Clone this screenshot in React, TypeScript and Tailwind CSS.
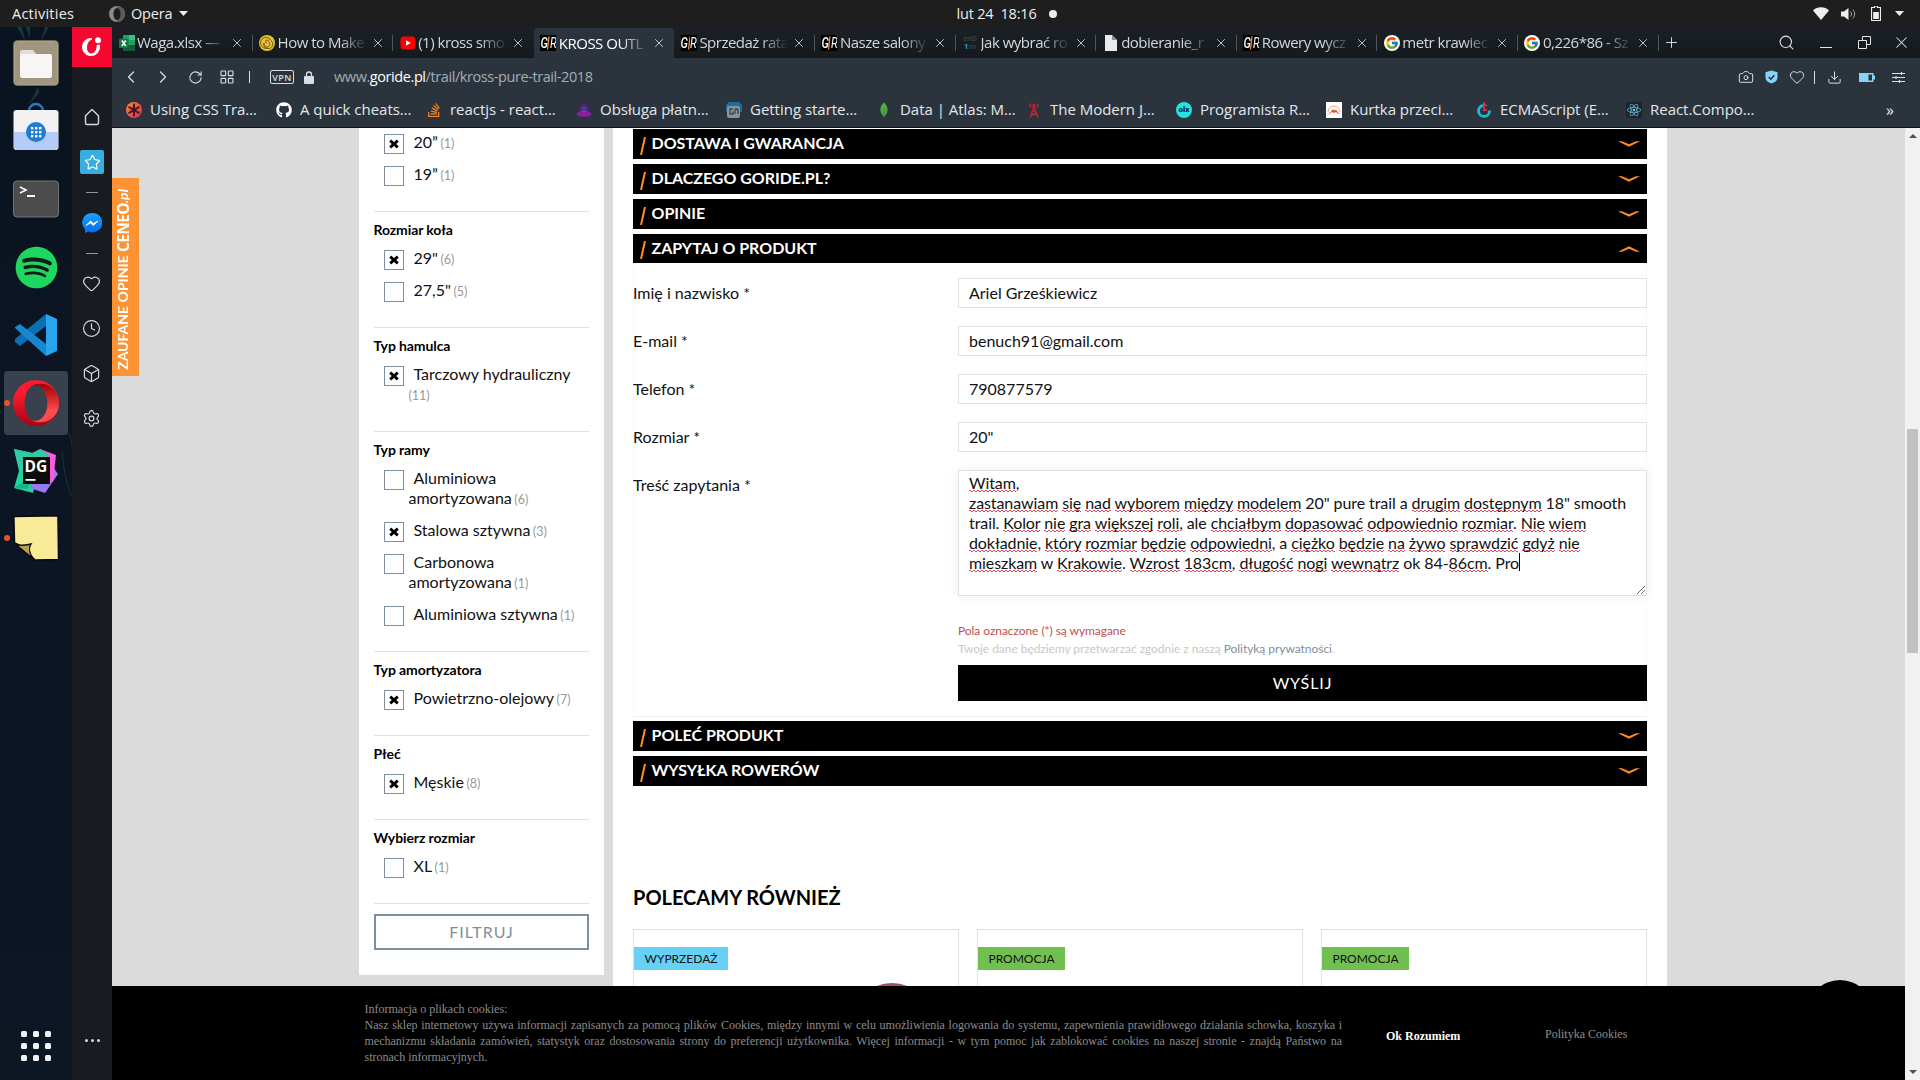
import React from "react";
import {
  Home,
  Star,
  Heart,
  Clock,
  Box,
  Settings,
  Search,
  X,
  Plus,
  ChevronLeft,
  ChevronRight,
  RotateCw,
  LayoutGrid,
  Camera,
  Download,
} from "lucide-react";
import { FaGithub, FaStackOverflow, FaSpotify, FaReact } from "react-icons/fa";
import { SiMongodb } from "react-icons/si";
import { FcGoogle } from "react-icons/fc";

/* ---------- small icons ---------- */

const Excel = () => (
  <svg viewBox="0 0 16 16" className="size-4">
    <rect x="4" y="0" width="12" height="16" rx="1" fill="#21a366" />
    <rect x="10" y="0" width="6" height="5" fill="#33c481" />
    <rect x="4" y="10" width="12" height="6" fill="#185c37" />
    <rect x="0" y="3.500" width="9.500" height="9.500" rx="1" fill="#107c41" />
    <path d="M2.800 5.500l4 5.500M6.800 5.500l-4 5.500" stroke="#fff" strokeWidth="1.500" />
  </svg>
);
const Spiral = () => (
  <svg viewBox="0 0 16 16" className="size-4">
    <circle cx="8" cy="8" r="8" fill="#e8c33a" />
    <path d="M8 8a1.500 1.500 0 1 1 1.500-1.500A3 3 0 1 1 5 8a4.500 4.500 0 1 0 7-2.500A5.500 5.500 0 1 0 9 13" fill="none" stroke="#7a5a10" strokeWidth="1" />
  </svg>
);
const YouTube = () => (
  <svg viewBox="0 0 16 16" className="size-4">
    <rect x="0.500" y="1.500" width="15" height="13" rx="3.500" fill="#f00" />
    <path d="M6 5.300v5.400L10.800 8z" fill="#fff" />
  </svg>
);
const GoRide = () => (
  <span className="flex size-4 items-center justify-center overflow-hidden bg-black font-['Roboto'] text-[14px] leading-4 text-white italic">
    <span className="flex w-[6.500px] scale-x-[0.800] justify-center font-medium">G</span>
    <svg viewBox="0 0 3 16" className="h-4 w-[2.500px] shrink-0">
      <path d="M2.400 0L.6 16" stroke="#ff8c26" strokeWidth="1.500" />
    </svg>
    <span className="flex w-[6.500px] scale-x-[0.800] justify-center">R</span>
  </span>
);
const EndPro = () => (
  <span className="flex size-4 flex-col items-center justify-center font-['Roboto'] text-[8px] leading-[8px] font-bold text-[#3a3d40]">
    <span>enD</span>
    <span>
      <span className="text-[#1da1e0]">1</span>ro
    </span>
  </span>
);
const Doc = () => (
  <svg viewBox="0 0 16 16" className="size-4">
    <path d="M2 0h7l5 5v11H2z" fill="#e8eaed" />
    <path d="M9 0v5h5" fill="#8a9096" />
  </svg>
);
const GoogleTab = () => (
  <span className="flex size-4 items-center justify-center rounded-full bg-white">
    <FcGoogle className="size-[14px]" />
  </span>
);

const tabs: { title: string; icon: React.ReactNode; active?: boolean }[] = [
  { title: "Waga.xlsx —", icon: <Excel /> },
  { title: "How to Make", icon: <Spiral /> },
  { title: "(1) kross smo", icon: <YouTube /> },
  { title: "KROSS OUTL", icon: <GoRide />, active: true },
  { title: "Sprzedaż rata", icon: <GoRide /> },
  { title: "Nasze salony", icon: <GoRide /> },
  { title: "Jak wybrać ro", icon: <EndPro /> },
  { title: "dobieranie_r", icon: <Doc /> },
  { title: "Rowery wycz", icon: <GoRide /> },
  { title: "metr krawiec", icon: <GoogleTab /> },
  { title: "0,226*86 - Sz", icon: <GoogleTab /> },
];

const bookmarks: { title: string; icon: React.ReactNode }[] = [
  {
    title: "Using CSS Tra…",
    icon: (
      <svg viewBox="0 0 16 16" className="size-4">
        <defs>
          <linearGradient id="bm" x1="0" y1="0" x2="1" y2="1">
            <stop offset="0" stopColor="#ff8a2a" />
            <stop offset="1" stopColor="#e2255b" />
          </linearGradient>
        </defs>
        <circle cx="8" cy="8" r="8" fill="url(#bm)" />
        <path d="M8 2.500v11M3.200 5.200l9.600 5.600M12.800 5.200l-9.600 5.600" stroke="#3a1d26" strokeWidth="2" strokeLinecap="round" />
      </svg>
    ),
  },
  { title: "A quick cheats…", icon: <FaGithub className="size-4 text-white" /> },
  { title: "reactjs - react…", icon: <FaStackOverflow className="size-4 text-[#f48024]" /> },
  {
    title: "Obsługa płatn…",
    icon: (
      <svg viewBox="0 0 16 16" className="size-4">
        <ellipse cx="8" cy="12" rx="7.500" ry="3" fill="#8a1fa0" />
        <path d="M2.500 10C2.500 5 5 2 8 2s5.500 3 5.500 8z" fill="#5b1f78" />
        <path d="M5 9h6M6 6h4" stroke="#2b7fd8" strokeWidth="1" />
      </svg>
    ),
  },
  {
    title: "Getting starte…",
    icon: (
      <svg viewBox="0 0 16 16" className="size-4">
        <path d="M0 3l3-3h10l3 3v7H0z" fill="#1a6f9c" />
        <rect x="1" y="4" width="13" height="12" rx="2" fill="#8a9299" />
        <path d="M7 7H4v5h3V9.500M9 7v5M12 7v5M9 7h3" stroke="#3a444c" strokeWidth="1.300" fill="none" />
      </svg>
    ),
  },
  { title: "Data | Atlas: M…", icon: <SiMongodb className="size-4 text-[#4faa41]" /> },
  {
    title: "The Modern J…",
    icon: (
      <svg viewBox="0 0 16 16" className="size-4" fill="none" stroke="#d11f2d" strokeWidth="1.200">
        <path d="M8 4L4 16M8 4l4 12M5.500 11l5 2M6.500 8l4 3M10.500 11l-6 3" />
        <path d="M5 1.500a3 3 0 0 0 0 4M11 1.500a3 3 0 0 1 0 4" />
        <circle cx="8" cy="3.500" r="1" fill="#d11f2d" />
      </svg>
    ),
  },
  {
    title: "Programista R…",
    icon: (
      <span className="flex size-4 items-center justify-center rounded-full bg-[#23e5db] font-['Roboto'] text-[8px] font-black tracking-normal text-[#002f34]">
        olx
      </span>
    ),
  },
  {
    title: "Kurtka przeci…",
    icon: (
      <svg viewBox="0 0 16 16" className="size-4">
        <rect width="16" height="16" fill="#fff" />
        <path d="M2 10a6 6 0 0 1 12 0" fill="none" stroke="#f2a07c" strokeWidth="1" />
        <path d="M2 13l5-6 1.500 1.500L10 7.500 14 13l-4-3-2 1-2-1z" fill="#e9562a" />
      </svg>
    ),
  },
  {
    title: "ECMAScript (E…",
    icon: (
      <svg viewBox="0 0 16 16" className="size-4" fill="none">
        <path d="M7 3.500a5.500 5.500 0 1 0 6.500 5" stroke="#19bcd6" strokeWidth="2.800" />
        <path d="M8 0v9M8 8h3M8 2l3 2" stroke="#e8384f" strokeWidth="1.500" />
      </svg>
    ),
  },
  {
    title: "React.Compo…",
    icon: (
      <span className="flex size-4 items-center justify-center rounded-[2px] bg-[#20232a]">
        <FaReact className="size-[14px] text-[#5fc9e8]" />
      </span>
    ),
  },
];

/* ---------- desktop shell ---------- */

function TopBar() {
  return (
    <div className="grid h-[27px] shrink-0 grid-cols-3 items-center bg-[#1e1e1e] font-['Open_Sans','Noto_Sans',sans-serif] text-[14.500px] tracking-[-0.200px] text-[#eeeeee]">
      <div className="flex items-center pl-3">
        <span className="w-[97px] tracking-[0.250px]">Activities</span>
        <svg viewBox="0 0 16 16" className="size-4">
          <ellipse cx="8" cy="8" rx="8" ry="8" fill="#8a8a8a" />
          <path d="M8 0a8 8 0 0 1 0 16z" fill="#5c5c5c" />
          <ellipse cx="8" cy="8" rx="3.600" ry="6" fill="#1e1e1e" />
        </svg>
        <span className="ml-1.5 w-[48px]">Opera</span>
        <svg viewBox="0 0 9 5" className="h-[5px] w-[9px]">
          <path d="M0 0h9L4.500 5z" fill="#eee" />
        </svg>
      </div>
      <div className="flex items-center justify-center pl-[93px]">
        <span className="w-[92px] whitespace-pre">lut 24  18:16</span>
        <span className="size-2 rounded-full bg-[#eeeeee]" />
      </div>
      <div className="flex items-center justify-end pr-4">
        <svg viewBox="0 0 16 13" className="h-[13px] w-4">
          <path d="M0 3.500C4-.8 12-.8 16 3.500L8 13z" fill="#eee" />
        </svg>
        <svg viewBox="0 0 16 14" className="ml-3 h-[14px] w-4">
          <path d="M0 4.500h3L7.500 1v12L3 9.500H0z" fill="#eee" />
          <path d="M9.500 4.500c1.300 1.500 1.300 3.500 0 5M11.800 2.500c2.400 2.800 2.400 6.200 0 9" stroke="#aaa" fill="none" />
        </svg>
        <svg viewBox="0 0 10 15" className="ml-3.5 h-[15px] w-[10px]">
          <path d="M3.500 0h3v1.500H9.500v13H.5v-13h3z" fill="none" stroke="#eee" strokeWidth="1.200" />
          <rect x="2.200" y="6" width="5.600" height="7" fill="#eee" />
        </svg>
        <svg viewBox="0 0 9 5" className="ml-3.5 h-[5px] w-[9px]">
          <path d="M0 0h9L4.500 5z" fill="#eee" />
        </svg>
      </div>
    </div>
  );
}

function Launcher() {
  return (
    <div className="relative flex w-[72px] shrink-0 flex-col items-center bg-linear-to-b from-[#0a1420] via-[#0b1524] to-[#0d1623]">
      <svg viewBox="0 0 72 90" className="absolute top-0 left-0 h-[90px] w-[72px]" fill="#17494d" opacity="0.7">
        <path d="M17 0l8 14-3-14zM49 0l-8 14 4-14zM26 0l4 12V0zM38 60l-9 18 10-12zM34 52l6-3-4 9z" />
      </svg>
      <svg viewBox="0 0 72 90" className="absolute top-[390px] left-0 h-[90px] w-[72px]" stroke="#1d4a50" fill="none" opacity="0.6">
        <path d="M66 10c3 8 6 12 6 20M62 34c2 22 4 30 10 46" />
      </svg>

      {/* Files */}
      <svg viewBox="0 0 46 46" className="relative mt-[13px] size-[46px]">
        <rect x="0.500" y="0.500" width="45" height="45" rx="4" fill="#aaa08a" stroke="#6f6859" />
        <rect x="2" y="2" width="42" height="42" rx="3" fill="#a0967f" />
        <path d="M7 12a2 2 0 0 1 2-2h11l3 4h13v6H7z" fill="#e2ded5" />
        <rect x="7" y="14" width="32" height="24" rx="2" fill="#f7f6f4" />
      </svg>
      {/* Software */}
      <svg viewBox="0 0 46 50" className="relative mt-[15px] h-[50px] w-[46px]">
        <path d="M16 10a7 7 0 0 1 14 0" stroke="#1f7ad0" strokeWidth="2.400" fill="none" />
        <rect x="0.500" y="9" width="45" height="40" rx="3" fill="#f2f2f2" />
        <path d="M1 31h44v15a3 3 0 0 1-3 3H4a3 3 0 0 1-3-3z" fill="#b6ccf8" />
        <circle cx="23" cy="31" r="10" fill="#1f7ad0" />
        {[0, 1, 2].map((r) =>
          [0, 1, 2].map((c) => <rect key={`${r}${c}`} x={18 + c * 4} y={26 + r * 4} width="2.400" height="2.400" fill="#fff" />),
        )}
      </svg>
      {/* Terminal */}
      <svg viewBox="0 0 46 38" className="relative mt-[29px] h-[38px] w-[46px]">
        <rect x="0.500" y="1" width="45" height="36" rx="3.500" fill="#4c4c4c" stroke="#747474" />
        <path d="M7 7l6 3-6 3" stroke="#fff" strokeWidth="1.600" fill="none" />
        <path d="M14 16h8" stroke="#fff" strokeWidth="2" />
      </svg>
      {/* Spotify */}
      <span className="relative mt-[28px] flex size-[42px] items-center justify-center rounded-full bg-[#111b18]">
        <FaSpotify className="size-[43px] shrink-0 text-[#1ed760]" />
      </span>
      {/* Code */}
      <svg viewBox="0 0 42 42" className="relative mt-[26px] size-[42px]">
        <path d="M31 0v12L5 32l-5-4v-3z" fill="#0b6fb5" />
        <path d="M5 10L31 30v12L0 14v-1z" fill="#1787cf" />
        <path d="M31 0l11 5v32l-11 5z" fill="#27a5f0" />
      </svg>
      {/* Opera */}
      <div className="relative mt-[15px] flex h-16 w-16 items-center justify-center rounded-[4px] bg-[#3a414e]">
        <svg viewBox="0 0 46 46" className="size-[46px]">
          <defs>
            <linearGradient id="opA" x1="0" y1="0" x2="0" y2="1">
              <stop offset="0.300" stopColor="#ff1b2d" />
              <stop offset="1" stopColor="#a70014" />
            </linearGradient>
            <linearGradient id="opB" x1="0" y1="0" x2="0" y2="1">
              <stop offset="0" stopColor="#9c0000" />
              <stop offset="0.700" stopColor="#ff4b4b" />
            </linearGradient>
          </defs>
          <path fillRule="evenodd" d="M23 0a23 23 0 1 0 0 46 23 23 0 1 0 0-46zM23 4.500c6 0 11.500 8 11.500 18.500S29 41.500 23 41.500 11.500 33.500 11.500 23 17 4.500 23 4.500z" fill="url(#opA)" />
          <path d="M17 6.500C30-1 46 7 46 23S30 47 17 39.500c10 5 17.500-5 17.500-16.500S27 1.500 17 6.500z" fill="url(#opB)" />
        </svg>
        <span className="absolute left-0 size-1.5 rounded-full bg-[#e95420]" />
      </div>
      {/* DataGrip */}
      <div className="relative mt-[13px] size-[46px]">
        <svg viewBox="0 0 46 46" className="size-[46px]">
          <path d="M1 1l28 6-9 38L1 40l5-17z" fill="#22d39a" />
          <path d="M27 1l18 25-13 19-15-5z" fill="#9a77f5" />
          <path d="M27 1l16 6-3 27-20-4z" fill="#ff5ad9" />
          <path d="M1 1l18 4 8-4 10 6-12 8-18 10z" fill="#33c9a5" />
          <path d="M7 36l11-5-3 10-14-1z" fill="#12b886" />
          <rect x="10" y="9" width="27" height="27" fill="#0c0c0c" />
          <rect x="12.500" y="31" width="10" height="1.800" fill="#fff" />
        </svg>
        <span className="absolute top-[10px] left-[11.500px] font-['Open_Sans'] text-[15.500px] leading-[17px] font-bold text-white">DG</span>
      </div>
      {/* Notes */}
      <div className="relative mt-[21px] flex h-[46px] w-16 items-center justify-center">
        <svg viewBox="0 0 46 46" className="size-[46px]">
          <path d="M0.800 1.500L45 .8l.6 43.700-23.600.5L6 30 1.500 28z" fill="#f9ea98" stroke="#0a0a0a" strokeWidth="1.600" />
          <path d="M1.500 28.500c4 3 10 2 16.500.5-2.500 4-2 10 3 15.500z" fill="#b5a24b" stroke="#0a0a0a" strokeWidth="1.400" />
        </svg>
        <span className="absolute left-0 size-1.5 rounded-full bg-[#e95420]" />
      </div>

      <div className="mt-auto mb-[19px] grid grid-cols-3 gap-1.5">
        {Array.from({ length: 9 }, (_, i) => (
          <span key={i} className="size-1.5 rounded-[1.500px] bg-[#f2f2f2]" />
        ))}
      </div>
    </div>
  );
}

function OperaSidebar() {
  return (
    <div className="flex w-10 shrink-0 flex-col items-center bg-[#181c20] text-[#d5dbe0]">
      <div className="flex h-[40px] w-10 shrink-0 items-center justify-center bg-[#f5082f]">
        <svg viewBox="0 0 20 20" className="size-5">
          <path d="M9 1a9 9 0 1 0 8.500 12c.8-2 .8-4 .2-5.500l-3 .5c.3 4-1.700 8.500-5.200 8.500S5 13.500 5 10s2-6.500 5-7.500V1z" fill="#fff" />
          <circle cx="16" cy="3.200" r="3" fill="#fff" />
        </svg>
      </div>
      {/* Plain house outline */}
      <svg viewBox="0 0 18 18" className="mt-[41px] size-[18px]" fill="none" stroke="currentColor" strokeWidth="1.400" strokeLinejoin="round">
        <path d="M9 1.500l6.500 6.300V15a1.500 1.500 0 0 1-1.500 1.500H4A1.500 1.500 0 0 1 2.500 15V7.800z" />
      </svg>
      <span className="mt-[24px] flex size-6 items-center justify-center rounded-[2px] bg-[#38aee0]">
        <Star className="size-[17px] text-white" strokeWidth={1.700} />
      </span>
      <span className="mt-[18px] h-px w-3 bg-[#8d979f]" />
      <svg viewBox="0 0 20 20" className="mt-5 size-5">
        <defs>
          <linearGradient id="ms" x1="0" y1="0" x2="0" y2="1">
            <stop offset="0" stopColor="#18a4fb" />
            <stop offset="1" stopColor="#0769f2" />
          </linearGradient>
        </defs>
        <path d="M10 0a9.700 9.700 0 0 0-7 16.500V20l3.200-1.500A10 9.700 0 1 0 10 0z" fill="url(#ms)" />
        <path d="M4 12.500L8.500 8l3 2.500L16 8l-4.500 4.500-3-2.500z" fill="#fff" stroke="#fff" strokeWidth="0.800" />
      </svg>
      <span className="mt-5 h-px w-3 bg-[#8d979f]" />
      <Heart className="mt-5 mr-px size-[19px]" strokeWidth={1.500} />
      <Clock className="mt-[26px] mr-px size-[19px]" strokeWidth={1.500} />
      <Box className="mt-[26px] mr-px size-[19px]" strokeWidth={1.500} />
      <Settings className="mt-[26px] mr-px size-[19px]" strokeWidth={1.500} />
      <div className="mt-auto mb-[38px] flex gap-[3px]">
        <span className="size-[3px] rounded-full bg-[#d5dbe0]" />
        <span className="size-[3px] rounded-full bg-[#d5dbe0]" />
        <span className="size-[3px] rounded-full bg-[#d5dbe0]" />
      </div>
    </div>
  );
}

function TabStrip() {
  return (
    <div className="flex h-[31px] shrink-0 items-stretch bg-linear-to-b from-[#1b2126] to-[#15191d]">
      {tabs.map((t, i) => (
        <div
          key={i}
          className={
            t.active
              ? "mt-px flex w-[140.600px] items-center rounded-t-[4px] bg-[#2b343d] pl-[6.500px] text-white"
              : "flex w-[140.600px] items-center pl-[6.500px] text-[#d3d7da]"
          }
        >
          <span className="shrink-0">{t.icon}</span>
          <span className="ml-[2.500px] w-[93px] text-[15px] tracking-[-0.500px] whitespace-nowrap [mask-image:linear-gradient(to_right,black_66%,transparent_96%)]">
            {t.title}
          </span>
          <X className="size-[14px] shrink-0 text-[#d3d7da]" strokeWidth={1.500} />
          <span className={t.active || i === 2 ? "ml-auto h-4" : "ml-auto h-4 w-px bg-[#4d545a]"} />
        </div>
      ))}
      <div className="flex flex-1 items-center text-[#e3e6e8]">
        <Plus className="ml-1 size-[17px]" strokeWidth={1.300} />
        <Search className="ml-[98px] size-[17px]" strokeWidth={1.500} />
        <span className="mt-[10px] ml-[25px] h-px w-3 bg-[#e3e6e8]" />
        <svg viewBox="0 0 13 13" className="ml-[26px] size-[13px]" fill="none" stroke="currentColor">
          <path d="M.5 4.500h8v8h-8zM4.500 4V.5h8v8H9" />
        </svg>
        <X className="ml-[21px] size-[19px]" strokeWidth={1.300} />
      </div>
    </div>
  );
}

function AddressBar() {
  return (
    <div className="flex h-[38px] shrink-0 items-center bg-[#2b343d] text-[#d9dee2]">
      <ChevronLeft className="ml-[9px] size-[20px]" strokeWidth={1.500} />
      <ChevronRight className="ml-3 size-[20px]" strokeWidth={1.500} />
      <RotateCw className="ml-[15px] size-[15px]" strokeWidth={1.700} />
      <LayoutGrid className="ml-4 size-4" strokeWidth={1.700} />
      <span className="ml-[14px] h-[12px] w-px bg-[#d9dee2]" />
      <span className="ml-5 flex h-[14px] w-6 items-center justify-center rounded-[2px] border border-[#d9dee2] text-[9px] leading-none font-semibold tracking-[0.400px]">
        VPN
      </span>
      <svg viewBox="0 0 10 13" className="ml-2.5 h-[13px] w-[10px]">
        <path d="M2.500 5V3.500a2.500 2.500 0 0 1 5 0V5" stroke="#d9dee2" strokeWidth="1.300" fill="none" />
        <rect y="5" width="10" height="8" rx="1" fill="#d9dee2" />
      </svg>
      <span className="ml-[20px] text-[14.500px] tracking-[-0.420px] text-[#a3adb5]">
        www.<span className="text-white">goride.pl</span>/trail/kross-pure-trail-2018
      </span>
      <div className="ml-auto flex items-center">
        <Camera className="size-4" strokeWidth={1.500} />
        <svg viewBox="0 0 14 14" className="ml-[11px] h-[14px] w-[13px]">
          <path d="M7 0l6.500 2v5c0 4-3 6-6.500 7C3.500 13 .5 11 .5 7V2z" fill="#84d4fb" />
          <path d="M4 7l2.300 2.300L10 5" stroke="#26323b" strokeWidth="1.600" fill="none" />
        </svg>
        <Heart className="ml-[11px] size-[16px]" strokeWidth={1.500} />
        <span className="ml-[9px] h-[13px] w-px bg-[#d9dee2]" />
        <Download className="ml-3 size-[15px]" strokeWidth={1.600} />
        <svg viewBox="0 0 17 9" className="ml-[17px] h-[9px] w-[17px]">
          <path d="M0 0h14.500v2.500H16v4h-1.500V9H0z" fill="#84d4fb" />
          <rect x="9.500" y="1.500" width="3.500" height="6" fill="#2b343d" />
        </svg>
        <svg viewBox="0 0 13 11" className="mr-[15px] ml-4 h-[11px] w-[13px]" stroke="currentColor" strokeWidth="1.100">
          <path d="M0 1.500h13M0 5.500h13M0 9.500h13M9.500 0v3M4 4v3M7.500 8v3" />
        </svg>
      </div>
    </div>
  );
}

function BookmarksBar() {
  return (
    <div className="flex h-[32px] shrink-0 items-center border-b border-[#101418] bg-[#2b343d] pb-1 text-[15px] tracking-[-0.020px] text-[#e3e7ea]">
      {bookmarks.map((b) => (
        <div key={b.title} className="flex w-[150px] items-center pl-[14px] whitespace-nowrap">
          <span className="mr-2 shrink-0">{b.icon}</span>
          {b.title}
        </div>
      ))}
      <span className="ml-[124px] text-[16px]">»</span>
    </div>
  );
}

/* ---------- shop page ---------- */

type Filter = { lines: string[]; count: number; on?: boolean };

const filterGroups: { title: string; items: Filter[] }[] = [
  { title: "Rozmiar koła", items: [{ lines: ['29"'], count: 6, on: true }, { lines: ['27,5"'], count: 5 }] },
  { title: "Typ hamulca", items: [{ lines: ["Tarczowy hydrauliczny", ""], count: 11, on: true }] },
  {
    title: "Typ ramy",
    items: [
      { lines: ["Aluminiowa", "amortyzowana"], count: 6 },
      { lines: ["Stalowa sztywna"], count: 3, on: true },
      { lines: ["Carbonowa", "amortyzowana"], count: 1 },
      { lines: ["Aluminiowa sztywna"], count: 1 },
    ],
  },
  { title: "Typ amortyzatora", items: [{ lines: ["Powietrzno-olejowy"], count: 7, on: true }] },
  { title: "Płeć", items: [{ lines: ["Męskie"], count: 8, on: true }] },
  { title: "Wybierz rozmiar", items: [{ lines: ["XL"], count: 1 }] },
];

function FilterItem({ lines, count, on }: Filter) {
  return (
    <div className="mb-3 flex pl-2.5">
      <span className="flex size-5 shrink-0 items-center justify-center border border-[#7f8f9d]">
        {on && (
          <svg viewBox="0 0 10 10" className="size-[10px]">
            <path d="M1.200 1.600l7.600 6.800M8.800 1.600L1.200 8.400" stroke="#000" strokeWidth="2.800" />
          </svg>
        )}
      </span>
      <div className="-mt-0.5 mb-0.5 pl-[4.500px] text-[16px] leading-5 whitespace-nowrap text-[#111]">
        {lines.map((l, i) => (
          <div key={i} className={i === 0 ? "h-5 pl-[5px]" : "h-5"}>
            {l}
            {i === lines.length - 1 && <span className={l ? "ml-[2.500px] text-[12.500px] text-[#999]" : "text-[12.500px] text-[#999]"}>({count})</span>}
          </div>
        ))}
      </div>
    </div>
  );
}

function Filters() {
  return (
    <div className="h-[847px] w-[245px] shrink-0 bg-white px-[15px] pt-1.5">
      <div className="pb-[13px]">
        <FilterItem lines={["20”"]} count={1} on />
        <FilterItem lines={["19”"]} count={1} />
      </div>
      {filterGroups.map((g) => (
        <div key={g.title} className="border-t border-[#e1e1e1] pb-[13px]">
          <div className="-ml-[0.500px] h-[38px] pt-2 text-[14px] leading-5 font-bold tracking-[-0.100px] text-black">{g.title}</div>
          {g.items.map((f, i) => (
            <FilterItem key={i} {...f} />
          ))}
        </div>
      ))}
      <div className="border-t border-[#e1e1e1] pt-2.5">
        <div className="flex h-9 items-center justify-center border-2 border-[#7f8f9d] text-[16px] tracking-[1px] text-[#7f8f9d]">FILTRUJ</div>
      </div>
    </div>
  );
}

function Bar({ title, open }: { title: string; open?: boolean }) {
  return (
    <div className={open ? "flex h-[29px] items-center bg-black" : "mb-[5px] flex h-[30px] items-center bg-black"}>
      <svg viewBox="0 0 6 18" className={open ? "mt-0.5 ml-[7px] h-[18px] w-[6px]" : "mt-[3px] ml-[7px] h-[18px] w-[6px]"}>
        <path d="M5 0L1 18" stroke="#ff8c26" strokeWidth="2" />
      </svg>
      <span className="mb-0.5 ml-[5.500px] text-[16px] leading-5 font-bold tracking-[-0.020px] text-white">{title}</span>
      <svg viewBox="0 0 22 6" className={open ? "mr-[7px] ml-auto h-[6px] w-[22px] rotate-180" : "mr-[7px] ml-auto h-[6px] w-[22px]"}>
        <path d="M0 .3h4L11 3.300 18 .3H22L11 5.700z" fill="#ff8c26" />
      </svg>
    </div>
  );
}

const fields = [
  ["Imię i nazwisko *", "Ariel Grześkiewicz"],
  ["E-mail *", "benuch91@gmail.com"],
  ["Telefon *", "790877579"],
  ["Rozmiar *", '20"'],
];

/* Words between underscores carry the spell-checker's mark. */
const message = [
  "_Witam_,",
  '_zastanawiam_ _się_ _nad_ _wyborem_ _między_ _modelem_ 20" pure trail a _drugim_ _dostępnym_ 18" smooth',
  "trail. _Kolor_ _nie_ _gra_ _większej_ _roli_, ale _chciałbym_ _dopasować_ _odpowiednio_ _rozmiar_. _Nie_ _wiem_",
  "_dokładnie_, _który_ _rozmiar_ _będzie_ _odpowiedni_, a _ciężko_ _będzie_ _na_ _żywo_ _sprawdzić_ _gdyż_ _nie_",
  "_mieszkam_ w _Krakowie_. _Wzrost_ _183cm_, _długość_ _nogi_ _wewnątrz_ ok 84-_86cm_. Pro",
];

function AskForm() {
  return (
    <div className="mb-1 h-[454px] border-x border-b border-x-[#fafafa] border-b-[#f0f0f0] pt-[15px] text-[16px] leading-5 text-[#111]">
      {fields.map(([label, value]) => (
        <div key={label} className="-mx-px mb-[18px] flex h-[30px] items-center">
          <span className="w-[325px]">{label}</span>
          <span className="flex h-[30px] flex-1 items-center border border-[#e1e1e1] px-2.5">{value}</span>
        </div>
      ))}
      <div className="-mx-px flex">
        <span className="w-[325px] pt-[5px]">Treść zapytania *</span>
        <div className="relative h-[126px] flex-1 border border-[#e1e1e1] px-2.5 pt-0.5 tracking-[-0.085px] whitespace-nowrap shadow-[0_0_10px_rgba(0,0,0,0.08)]">
          {message.map((line, n) => (
            <div key={n} className="flex h-5">
              <span className="whitespace-pre">
                {line.split("_").map((part, i) =>
                  i % 2 ? (
                    <span
                      key={i}
                      className="bg-[linear-gradient(90deg,#f0435a_50%,transparent_50%),linear-gradient(90deg,#f0435a_50%,transparent_50%)] bg-repeat-x [background-position:0_calc(100%-1px),2px_100%] [background-size:4px_1px]"
                    >
                      {part}
                    </span>
                  ) : (
                    part
                  ),
                )}
              </span>
              {n === message.length - 1 && <span className="h-[18px] w-px bg-black" />}
            </div>
          ))}
          <svg viewBox="0 0 8 8" className="absolute right-px bottom-px size-2" stroke="#555" strokeWidth="0.900">
            <path d="M0 8L8 0M4 8l4-4" />
          </svg>
        </div>
      </div>
      <div className="-mr-px ml-[324px] pt-[26px]">
        <div className="text-[12px] leading-[18px] tracking-[-0.060px] text-[#c0504d]">Pola oznaczone (*) są wymagane</div>
        <div className="text-[12px] leading-[18px] tracking-[-0.050px] text-[#c8c8c8]">
          Twoje dane będziemy przetwarzać zgodnie z naszą <span className="text-[#7f8f9d]">Polityką prywatności</span>.
        </div>
        <div className="mt-[7px] flex h-9 items-center justify-center bg-black text-[16px] tracking-[0.900px] text-white">WYŚLIJ</div>
      </div>
    </div>
  );
}

function Product({ badge, sale }: { badge: string; sale?: boolean }) {
  return (
    <div className="relative h-[320px] flex-1 border border-[#e1e1e1] pt-[17px]">
      <span
        className={
          sale
            ? "flex h-[23px] w-[94px] items-center justify-center bg-[#66d0f5] text-[12px] text-[#111]"
            : "flex h-[23px] w-[87px] items-center justify-center bg-[#71bf50] text-[12px] text-[#111]"
        }
      >
        {badge}
      </span>
      {sale && <span className="absolute top-[53px] left-[219px] size-[78px] rounded-full border-[3px] border-[#a8505e]" />}
    </div>
  );
}

function Page() {
  return (
    <div className="flex min-h-0 flex-1 overflow-hidden bg-[#dbdbdb] font-['Lato',sans-serif]">
      <div className="mt-[50px] flex h-[198px] w-[27px] shrink-0 items-center justify-center bg-[#fd9333] pt-1 pr-[3px]">
        <span className="rotate-180 font-['Lato'] text-[14px] leading-none font-bold whitespace-nowrap text-white [writing-mode:vertical-rl]">
          ZAUFANE OPINIE <span className="font-['Open_Sans'] text-[15.500px] tracking-[-0.700px]">CENEO</span>
          <span className="text-[14px] italic">.pl</span>
        </span>
      </div>
      <div className="ml-[220px] shrink-0">
        <Filters />
      </div>
      <div className="ml-[9px] w-[1054px] shrink-0 bg-white px-5 pt-px">
        <Bar title="DOSTAWA I GWARANCJA" />
        <Bar title="DLACZEGO GORIDE.PL?" />
        <Bar title="OPINIE" />
        <Bar title="ZAPYTAJ O PRODUKT" open />
        <AskForm />
        <Bar title="POLEĆ PRODUKT" />
        <Bar title="WYSYŁKA ROWERÓW" />
        <div className="mt-[93px] h-[50px] text-[20px] leading-9 font-bold text-black">POLECAMY RÓWNIEŻ</div>
        <div className="flex gap-[18px]">
          <Product badge="WYPRZEDAŻ" sale />
          <Product badge="PROMOCJA" />
          <Product badge="PROMOCJA" />
        </div>
      </div>
      <div className="mt-[852px] ml-[140px] size-[66px] shrink-0 rounded-full bg-black" />
    </div>
  );
}

function CookieBar() {
  return (
    <div className="flex h-[94px] shrink-0 bg-black pt-[15px] pl-[252.500px] font-['Liberation_Serif',serif] text-[12px] leading-4 text-[#8c8c8c]">
      <div className="w-[977.500px] text-justify">
        <div>Informacja o plikach cookies:</div>
        Nasz sklep internetowy używa informacji zapisanych za pomocą plików Cookies, między innymi w celu umożliwienia logowania do
        systemu, zapewnienia prawidłowego działania schowka, koszyka i mechanizmu składania zamówień, statystyk oraz dostosowania
        strony do preferencji użytkownika. Więcej informacji - w tym pomoc jak zablokować cookies na naszej stronie - znajdą Państwo
        na stronach informacyjnych.
      </div>
      <span className="mt-[27px] ml-[44px] w-[159px] font-bold text-white">Ok Rozumiem</span>
      <span className="mt-[25px]">Polityka Cookies</span>
    </div>
  );
}

function Scrollbar() {
  return (
    <div className="flex w-[15px] shrink-0 flex-col items-center bg-[#f1f1f1]">
      <svg viewBox="0 0 8 4" className="mt-1.5 h-1 w-2">
        <path d="M0 4h8L4 0z" fill="#505050" />
      </svg>
      <span className="mt-[291px] h-[224px] w-[11px] bg-[#c1c1c1]" />
      <svg viewBox="0 0 8 4" className="mt-auto mb-1.5 h-1 w-2">
        <path d="M0 0h8L4 4z" fill="#505050" />
      </svg>
    </div>
  );
}

export default function App() {
  return (
    <div className="flex h-[1080px] w-[1920px] flex-col overflow-hidden bg-black">
      <TopBar />
      <div className="flex min-h-0 flex-1">
        <Launcher />
        <OperaSidebar />
        <div className="flex min-w-0 flex-1 flex-col font-['Open_Sans','Noto_Sans',sans-serif]">
          <TabStrip />
          <AddressBar />
          <BookmarksBar />
          <div className="flex min-h-0 flex-1">
            <div className="flex min-w-0 flex-1 flex-col">
              <Page />
              <CookieBar />
            </div>
            <Scrollbar />
          </div>
        </div>
      </div>
    </div>
  );
}
